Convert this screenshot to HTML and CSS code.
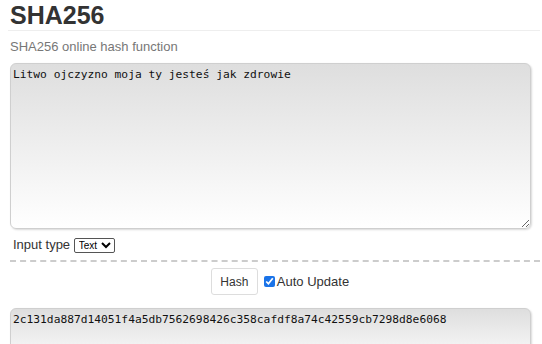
FILE: index.html
```html
<!DOCTYPE html>
<html lang="en">
<head>
    <meta charset="UTF-8">
    <meta name="viewport" content="width=device-width, initial-scale=1.0">
    <title>SHA256</title>
    <link rel="stylesheet" href="styles.css">
</head>
<body>
    <!-- Title block -->
    <div class="page">
        <h1 class="title">SHA256</h1>
        <p class="subtitle">SHA256 online hash function</p>

        <!-- Input -->
        <textarea class="input-box" spellcheck="false">Litwo ojczyzno moja ty jesteś jak zdrowie</textarea>

        <div class="input-type">
            Input type
            <select class="type-select">
                <option>Text</option>
                <option>Hex</option>
            </select>
        </div>

        <div class="controls">
            <button class="hash-btn">Hash</button>
            <label class="auto"><input type="checkbox" checked> Auto Update</label>
        </div>

        <!-- Output -->
        <div class="output-box">2c131da887d14051f4a5db7562698426c358cafdf8a74c42559cb7298d8e6068</div>
    </div>
</body>
</html>
```
FILE: styles.css
```css
/* Basic Reset */
* {
    margin: 0;
    padding: 0;
    box-sizing: border-box;
}

body {
    font-family: "Liberation Sans", Arial, sans-serif;
    color: #333;
    background-color: white;
    overflow: hidden;
}

.page {
    padding: 0 2px 0 8px;
}

/* Heading */
.title {
    font-size: 25px;
    font-weight: bold;
    color: #333;
    line-height: 30px;
    padding: 0 0 0 2px;
    border-bottom: 1px solid #eeeeee;
}

.subtitle {
    font-size: 13px;
    color: #777;
    padding: 8px 0 0 2px;
    line-height: 15px;
}

/* Text input */
.input-box {
    display: block;
    width: 521px;
    height: 166px;
    margin: 9px 0 0 2px;
    padding: 4px 2px;
    font-family: "DejaVu Sans Mono", monospace;
    font-size: 11.25px;
    color: #111;
    border: 1px solid #cfcfcf;
    border-radius: 6px;
    background: linear-gradient(#dedede, #ffffff);
    box-shadow: 1px 1px 2px rgba(0, 0, 0, 0.15);
    outline: none;
}

.input-type {
    font-size: 13px;
    color: #333;
    padding: 8px 0 7px 3px;
    border-bottom: 2px dashed #cccccc;
    margin-left: 2px;
    line-height: 15px;
}

.type-select {
    font-family: "Liberation Sans", Arial, sans-serif;
    font-size: 10px;
    height: 15px;
    padding: 0;
    border: 1px solid #555;
    border-radius: 2px;
    background: white;
}

/* Hash button row */
.controls {
    display: flex;
    justify-content: center;
    align-items: center;
    gap: 6px;
    padding: 6px 0 0 12px;
}

.hash-btn {
    width: 47px;
    height: 27px;
    font-family: "Liberation Sans", Arial, sans-serif;
    font-size: 12px;
    color: #333;
    background: white;
    border: 1px solid #dddddd;
    border-radius: 3px;
}

.auto {
    font-size: 13px;
    color: #333;
    display: flex;
    align-items: center;
    gap: 2px;
}

.auto input {
    width: 11px;
    height: 11px;
    accent-color: #1a73e8;
}

/* Output */
.output-box {
    width: 521px;
    height: 60px;
    margin: 13px 0 0 2px;
    padding: 4px 2px;
    font-family: "DejaVu Sans Mono", monospace;
    font-size: 11.25px;
    color: #111;
    border: 1px solid #cfcfcf;
    border-radius: 6px;
    background: linear-gradient(#dedede, #ffffff);
    box-shadow: 1px 1px 2px rgba(0, 0, 0, 0.15);
}
```
